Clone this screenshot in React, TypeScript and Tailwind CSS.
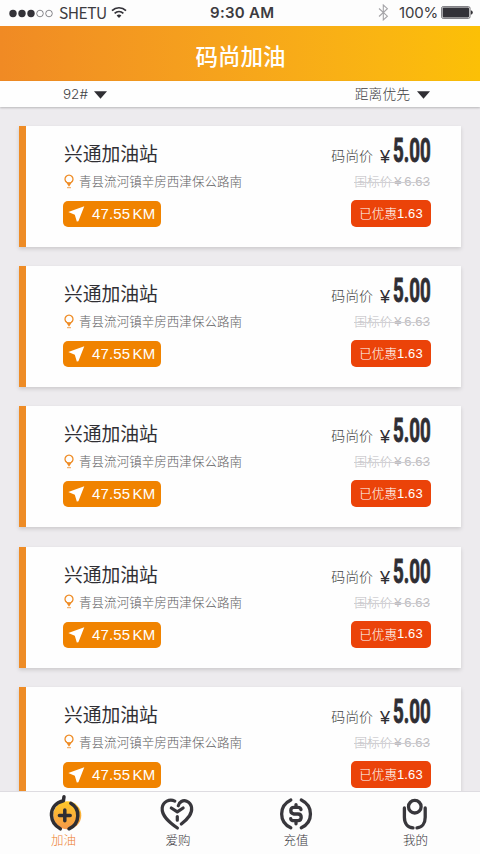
import { useState } from "react";

interface Station {
    name: string;
    address: string;
    distance: string;
    price: string;
    original: string;
    saved: string;
}

const station: Station = {
    name: '兴通加油站',
    address: '青县流河镇辛房西津保公路南',
    distance: '47.55 KM',
    price: '5.00',
    original: '6.63',
    saved: '1.63',
};

const stations: Station[] = [station, station, station, station, station];

const StatusBar = () => (
    <div className="flex h-[26px] shrink-0 items-center bg-[#fdfdfd] text-[#3c3b40]">
        <svg className="ml-[9px] h-[9px] w-[45px]" viewBox="0 0 45 9">
            <circle cx="4" cy="4.5" r="3.7" fill="#333238" />
            <circle cx="13" cy="4.5" r="3.7" fill="#333238" />
            <circle cx="22" cy="4.5" r="3.7" fill="#333238" />
            <circle cx="31" cy="4.5" r="3.3" fill="none" stroke="#55545a" strokeWidth="0.7" />
            <circle cx="40" cy="4.5" r="3.3" fill="none" stroke="#55545a" strokeWidth="0.7" />
        </svg>
        <span className="-mt-[2px] ml-[5px] w-[47px] whitespace-nowrap font-['Noto_Sans_CJK_SC',sans-serif] text-[15.5px] leading-[26px] tracking-[-0.5px]">SHETU</span>
        <svg className="-mt-[2px] ml-[5px] h-[13px] w-[16px]" viewBox="0 0 16 13" fill="none" stroke="#333238" strokeWidth="1.7">
            <path d="M1 4.6C5 .8 11 .8 15 4.6" />
            <path d="M3.6 7.3c2.6-2.4 6.2-2.4 8.8 0" />
            <path d="M5.6 9.5Q8 7.6 10.4 9.5L8 12Z" fill="#333238" stroke="none" />
        </svg>
        <span className="ml-[83px] w-[66px] whitespace-nowrap font-[Inter,sans-serif] text-[15px] font-semibold leading-[26px] tracking-[0.3px]">9:30 AM</span>
        <svg className="-mt-[2px] ml-[102px] h-[17px] w-[11px]" viewBox="0 0 11 17" fill="none" stroke="#a5a4a8" strokeWidth="1.1">
            <path d="M1 4.5l8.4 7.7-4.1 3.7V1l4.1 3.7L1 12.5" />
        </svg>
        <span className="ml-[10px] w-[39px] whitespace-nowrap font-[Inter,sans-serif] text-[15px] leading-[26px] tracking-[-0.2px]">100%</span>
        <svg className="-mt-[1px] ml-[3px] h-[13px] w-[32px]" viewBox="0 0 32 13">
            <rect x=".6" y=".6" width="28.4" height="11.8" rx="1.5" fill="none" stroke="#77767b" />
            <rect x="1.6" y="1.6" width="26.4" height="9.8" rx=".8" fill="#333238" />
            <path d="M29.8 4.2q2 .4 2 2.3t-2 2.3z" fill="#333238" />
        </svg>
    </div>
);

const Caret = () => (
    <svg className="mt-[1px] h-[8px] w-[13px]" viewBox="0 0 13 8">
        <path d="M0 .3h13L6.5 7.8z" fill="#2f2e33" />
    </svg>
);

const StationCard: React.FC<{ item: Station }> = ({ item }) => (
    <div className="flex h-[121px] shrink-0 justify-between border-l-[7px] border-[#ee8c26] bg-[#fefefe] pr-[30px] shadow-[0_2px_4px_rgba(0,0,0,0.14)]">
        <div className="ml-[37px] flex flex-col items-start">
            <h2 className="ml-[1px] mt-[13px] h-[28px] whitespace-nowrap text-[18.8px] font-normal leading-[28px] text-[#302f34]">{item.name}</h2>
            <div className="mt-[4px] flex h-[20px] items-center">
                <svg className="h-[15px] w-[12px]" viewBox="0 0 12 15" fill="none">
                    <path d="M3.7 8.4A4 4 0 1 1 8.3 8.4" stroke="#ee8c26" strokeWidth="1.3" />
                    <path d="M2.4 7.2Q6 9.2 9.6 7.2L6 12.8Z" fill="#ee8c26" />
                    <path d="M4 13.7h4" stroke="#ee8c26" strokeWidth=".8" />
                </svg>
                <p className="ml-[4px] whitespace-nowrap text-[12.55px] font-light leading-[20px] text-[#5f5e63]">{item.address}</p>
            </div>
            <div className="mt-[10px] flex h-[26px] w-[98px] items-center rounded-[5px] bg-[#f08300]">
                <svg className="ml-[5px] h-[16px] w-[17px]" viewBox="0 0 17 16">
                    <path d="M16.3.2L.3 6.1l6.5 2.6 2 6.9 1.6-.3z" fill="#fff" />
                </svg>
                <span className="ml-[7px] whitespace-nowrap font-['Liberation_Sans',sans-serif] text-[15px] leading-[26px] tracking-[0.15px] [word-spacing:-2px] text-white">{item.distance}</span>
            </div>
        </div>
        <div className="flex flex-col items-end">
            <div className="mt-[6px] flex h-[38px] items-start whitespace-nowrap">
                <span className="mt-[13px] text-[13.9px] font-light leading-[20px] text-[#3f3e43]">码尚价</span>
                <span className="ml-[7px] mt-[14px] w-[12px] font-['Liberation_Sans',sans-serif] text-[18px] leading-[22px] text-[#2f2e33]">¥</span>
                <span className="ml-[1px] block w-[38px]">
                    <span className="block w-max origin-left scale-x-[0.56] font-[Roboto,sans-serif] text-[33.5px] font-bold leading-[38px] text-[#2f2e33] [-webkit-text-stroke:0.9px_#2f2e33]">{item.price}</span>
                </span>
            </div>
            <span className="relative mr-[1px] mt-[1px] flex h-[20px] whitespace-nowrap text-[12.6px] font-light leading-[20px] text-[#bdbcc0]">
                国标价
                <span className="ml-[2px] font-['Liberation_Sans',sans-serif] text-[13px] leading-[22px] [word-spacing:-1px] tracking-[0.1px]">¥ {item.original}</span>
                <span className="absolute left-0 right-0 top-[11px] h-[1px] bg-[#d0cfd3]" />
            </span>
            <span className="mt-[9px] flex h-[27px] w-[80px] items-center justify-center whitespace-nowrap rounded-[5px] bg-[#eb4309] text-[12.6px] font-light text-white">已优惠<span className="font-['Liberation_Sans',sans-serif] text-[13px] tracking-[0.1px]">{item.saved}</span></span>
        </div>
    </div>
);

const FuelIcon = () => (
    <svg className="h-[40px] w-[36px]" viewBox="0 0 36 40" fill="none">
        <defs>
            <linearGradient id="fuel" x1="0" y1="0" x2="0" y2="1">
                <stop offset="0" stopColor="#ffc928" />
                <stop offset="1" stopColor="#f5984a" />
            </linearGradient>
        </defs>
        <circle cx="19.3" cy="21.3" r="14" fill="url(#fuel)" />
        <g stroke="#2f2e33" strokeWidth="3.5" strokeLinecap="round" strokeLinejoin="round">
            <path d="M16 2.8L15.4 6.7C7.5 8.6 3.2 14.2 3.5 21.5 3.8 27.5 7.2 32 12.3 34.8" />
            <path d="M22.8 9.3C28 12.3 30.2 16.5 29.8 22 29.5 28 26.5 32.5 21 34.8" />
            <path d="M16.8 16v10.8M11.4 21.4h10.8" />
        </g>
    </svg>
);

const HeartIcon = () => (
    <svg className="h-[40px] w-[36px]" viewBox="0 0 36 40" fill="none" stroke="#38373c" strokeWidth="3.2" strokeLinecap="round" strokeLinejoin="round">
        <path d="M15.8 7.1C10.5 4.7 4 7.5 3.2 13.8 2.4 22 10.5 28.5 18.4 34" />
        <path d="M19.3 11.8C20 8 24 5.7 27.7 7.2 33.5 9.5 34 17 30.3 22 28 25.5 25 27.9 22.3 30" />
        <path d="M12.3 14l6 3.9 5.8-3.9M18.3 22.5v3.7" />
    </svg>
);

const CoinIcon = () => (
    <svg className="h-[40px] w-[36px]" viewBox="0 0 36 40" fill="none" stroke="#38373c" strokeWidth="3.3" strokeLinecap="round">
        <path d="M12.8 6C.6 12 .6 28 12.8 33.8" />
        <path d="M23.3 6C35.5 12 35.5 28 23.3 33.8" />
        <path d="M23 15.6Q22.6 13.4 20 13.4h-4Q12.8 13.4 12.8 16.5T16 20h4Q23.2 20 23.2 23.3T20 26.7H16Q13 26.7 12.7 24.7M18 10.6v2.4M18 27.2v2.6" />
    </svg>
);

const UserIcon = () => (
    <svg className="h-[40px] w-[36px]" viewBox="0 0 36 40" fill="none" stroke="#38373c" strokeWidth="3.3" strokeLinecap="round">
        <circle cx="17.8" cy="12.7" r="6.3" />
        <path d="M7.4 14v9.2C7.4 29.7 11 33.5 16 33.9" />
        <path d="M28.2 14v9.2C28.2 29.7 24.8 33.5 20 33.9" />
    </svg>
);

const tabs = [
    { label: '加油', icon: <FuelIcon />, box: 'ml-[48px]', text: 'pr-[5px]' },
    { label: '爱购', icon: <HeartIcon />, box: 'ml-[75px]', text: 'pl-[2px]' },
    { label: '充值', icon: <CoinIcon />, box: 'ml-[83px]', text: 'pl-0' },
    { label: '我的', icon: <UserIcon />, box: 'ml-[83px]', text: 'pl-[1px]' },
];

export default function App() {
    const [active, setActive] = useState<number>(0);

    return (
        <div className="flex h-[854px] w-[480px] flex-col overflow-hidden bg-[#edebee] font-['Noto_Sans_CJK_SC',sans-serif]">
            <StatusBar />
            <header className="flex h-[55px] shrink-0 items-center justify-center bg-linear-to-r from-[#f08a24] to-[#fcc006]">
                <h1 className="pl-[1px] pt-[2px] text-[22.5px] font-medium leading-[32px] text-white">码尚加油</h1>
            </header>
            <div className="z-10 flex h-[26px] shrink-0 items-center justify-between bg-[#fefefe] pl-[63px] pr-[50px] text-[13.8px] font-light leading-[24px] text-[#3f3e43] shadow-[0_1px_2px_rgba(0,0,0,0.22)]">
                <button className="flex h-[26px] items-start gap-[7px]">
                    <span className="w-[24px] whitespace-nowrap text-left font-[Inter,sans-serif] text-[13.5px] leading-[26px]">92#</span>
                    <span className="mt-[9px]"><Caret /></span>
                </button>
                <button className="flex h-[26px] items-start gap-[7px]">
                    <span>距离优先</span>
                    <span className="mt-[9px]"><Caret /></span>
                </button>
            </div>
            <main className="flex min-h-0 flex-1 flex-col gap-[19.2px] overflow-hidden pl-[19px] pr-[19px] pt-[19px]">
                {stations.map((item, index) => (
                    <StationCard key={index} item={item} />
                ))}
            </main>
            <nav className="z-10 flex h-[63px] shrink-0 items-start border-t border-[#dedce1] bg-[#fdfdfd]">
                {tabs.map((tab, index) => (
                    <button
                        key={tab.label}
                        onClick={() => setActive(index)}
                        className={`flex w-[36px] flex-col items-center pt-[2px] ${tab.box}`}
                    >
                        {tab.icon}
                        <span className={`-mt-[3px] whitespace-nowrap text-[12.5px] font-light leading-[18px] ${tab.text} ${index === active ? 'text-[#ed7d2b]' : 'text-[#38373c]'}`}>{tab.label}</span>
                    </button>
                ))}
            </nav>
        </div>
    );
}
